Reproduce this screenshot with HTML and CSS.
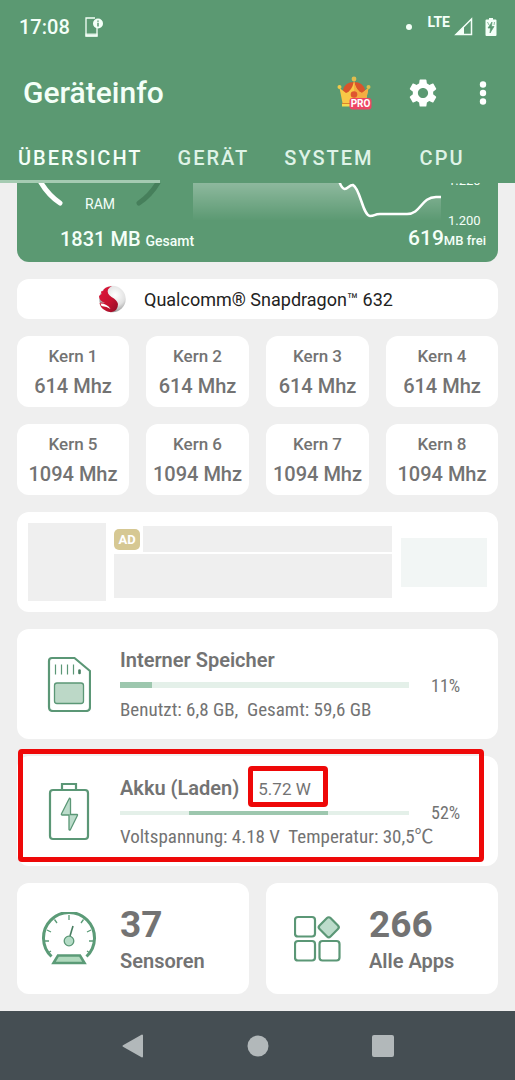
FILE: index.html
```html
<!DOCTYPE html>
<html lang="de">
<head>
<meta charset="utf-8">
<meta name="viewport" content="width=device-width, initial-scale=1">
<title>Geräteinfo</title>
<link rel="stylesheet" href="styles.css">
</head>
<body>
<header class="header">
  <div class="status">
    <time class="clock">17:08</time>
    <svg class="status-note" width="20" height="22" viewBox="0 0 20 22"><path d="M11 2H2v18h11v-8" fill="none" stroke="#f4fff8" stroke-width="1.300"/><path d="M1.500 17.500h12v3h-12z" fill="#f4fff8" opacity=".85"/><circle cx="14" cy="7.500" r="5" fill="#f4fff8"/><path d="M14 4.500v1.300M14 6.800v3.700" stroke="#5b9972" stroke-width="1.500"/></svg>
    <span class="status-dot"></span>
    <span class="lte">LTE</span>
    <svg class="signal" width="19" height="19" viewBox="0 0 19 19"><path d="M17.500 2v15.500H2z" fill="none" stroke="#f4fff8" stroke-width="1.500"/><path d="M10 9.500v8H2z" fill="#f4fff8"/></svg>
    <svg class="charge" width="12" height="20" viewBox="0 0 12 20"><path d="M4 1h4v1.500h2.500q1 0 1 1v14.500q0 1-1 1h-9q-1 0-1-1V3.500q0-1 1-1H4z" fill="#f4fff8"/><path d="M7 5 3 11h2.500L5 16l4-6.500H6.500zM2.500 5l1.500 3M9.500 5 9 8" fill="#5b9972" stroke="#5b9972" stroke-width=".7"/></svg>
  </div>
  <div class="toolbar">
    <h1 class="app-title">Geräteinfo</h1>
    <button class="icon-button" aria-label="Pro-Version">
      <svg width="36" height="36" viewBox="0 0 36 36">
        <path d="M7 15Q9 7 18 7t11 8l-2 10H9z" fill="#d9542b"/>
        <path d="M3.500 13 10 18q6-2 8-12 2 10 8 12l6.500-5-3 15H6.500z" fill="#f9c847"/>
        <path d="M18 6q2 10 8 12l6.500-5-3 15H18z" fill="#f5ad42"/>
        <path d="M6 28h12v3.500H6z" fill="#f5da4f"/><path d="M6 28h12v1H6z" fill="#d9862d"/>
        <circle cx="18" cy="19.500" r="3.300" fill="#df5630"/>
        <circle cx="18" cy="4" r="2.400" fill="#e1bd4e"/><circle cx="3.500" cy="12" r="2" fill="#f2ca4a"/><circle cx="32.500" cy="12" r="2" fill="#d9bd4d"/>
        <rect x="13.500" y="23" width="22" height="11.500" rx="3" fill="#ee4564"/>
        <text class="pro" x="24.500" y="32" text-anchor="middle">PRO</text>
      </svg>
    </button>
    <button class="icon-button" aria-label="Einstellungen">
      <svg width="34" height="34" viewBox="0 0 24 24"><path fill="#fff" d="M19.140 12.940c.040-.300.060-.610.060-.940 0-.320-.020-.640-.070-.940l2.030-1.580c.180-.140.230-.410.120-.610l-1.920-3.320c-.120-.220-.370-.290-.590-.220l-2.390.960c-.500-.380-1.030-.700-1.620-.940l-.360-2.540c-.040-.240-.240-.410-.480-.410h-3.840c-.240 0-.430.170-.470.410l-.360 2.540c-.590.240-1.130.570-1.620.940l-2.390-.960c-.220-.080-.470 0-.590.220L2.740 8.870c-.120.210-.080.470.120.610l2.030 1.580c-.050.300-.090.630-.090.940s.020.640.070.940l-2.030 1.580c-.180.140-.230.410-.120.610l1.920 3.320c.120.220.370.290.590.220l2.390-.960c.500.380 1.030.700 1.620.940l.360 2.540c.050.240.240.410.480.410h3.840c.240 0 .440-.170.470-.410l.360-2.540c.590-.240 1.130-.560 1.620-.940l2.390.960c.220.080.470 0 .590-.220l1.920-3.320c.120-.220.070-.470-.120-.610l-2.010-1.580zM12 15.600c-1.980 0-3.600-1.620-3.600-3.600s1.620-3.600 3.600-3.600 3.600 1.620 3.600 3.600-1.620 3.600-3.600 3.600z"/></svg>
    </button>
    <button class="icon-button more" aria-label="Mehr">
      <svg width="8" height="26" viewBox="0 0 8 26"><g fill="#fff"><circle cx="4" cy="4.500" r="3.200"/><circle cx="4" cy="13" r="3.200"/><circle cx="4" cy="21.500" r="3.200"/></g></svg>
    </button>
  </div>
  <nav class="tabs">
    <a class="tab tab-active" href="#uebersicht">ÜBERSICHT</a>
    <a class="tab" href="#geraet">GERÄT</a>
    <a class="tab" href="#system">SYSTEM</a>
    <a class="tab" href="#cpu">CPU</a>
  </nav>
</header>

<main class="content" id="uebersicht">
  <section class="ram">
    <div class="ram-left">
      <div class="gauge">
        <svg width="28" height="24" viewBox="0 0 28 24"><path d="M3-2Q11 12 23 20" fill="none" stroke="#fff" stroke-width="5" stroke-linecap="round"/></svg>
        <span class="gauge-label">RAM</span>
        <svg width="28" height="24" viewBox="0 0 28 24"><path d="M24-2Q16 12 4 20" fill="none" stroke="#467f5b" stroke-width="5" stroke-linecap="round"/></svg>
      </div>
      <p class="ram-total">1831 MB <small>Gesamt</small></p>
    </div>
    <div class="ram-right">
      <div class="chart">
        <svg class="chart-plot" viewBox="0 0 248 42" preserveAspectRatio="none">
          <defs><linearGradient id="fade" x1="0" y1="0" x2="0" y2="1"><stop offset="0" stop-color="#fff" stop-opacity=".31"/><stop offset=".9" stop-color="#fff" stop-opacity="0"/></linearGradient></defs>
          <path d="M0 0H147C152 10 155 1 160 2C167 5 170 33 177 33C182 33 181 31 187 31H214C228 31 228 14 243 14H248V42H0z" fill="url(#fade)"/>
          <path d="M146-2C152 14 155 1 160 2C167 5 170 33 177 33C182 33 181 31 187 31H214C228 31 228 14 243 14H248" fill="none" stroke="#fff" stroke-width="2.500"/>
        </svg>
        <div class="axis"><span>1.220</span><span>1.200</span></div>
      </div>
      <p class="ram-free">619<small>MB frei</small></p>
    </div>
  </section>

  <section class="card soc">
    <svg width="28" height="28" viewBox="0 0 28 28">
      <defs><radialGradient id="ball" cx=".6" cy=".35" r=".65"><stop offset="0" stop-color="#fff"/><stop offset=".6" stop-color="#e2e2e2"/><stop offset="1" stop-color="#9a9a9a"/></radialGradient><linearGradient id="flame" x1="0" y1="0" x2="1" y2="1"><stop offset="0" stop-color="#e3163b"/><stop offset=".6" stop-color="#c41230"/><stop offset="1" stop-color="#8d0c25"/></linearGradient></defs>
      <circle cx="14.500" cy="14" r="13.200" fill="url(#ball)"/>
      <path d="M14 1Q6 2 5 6L3 6.500 3.500 9 1 11Q1 16 7 18 2 17 1.500 18.500 3.500 26 13 27.300 20 26 20 19 19 15 13.500 12 8.500 8.500 10 4.500 11.500 2 14 1z" fill="url(#flame)"/>
      <path d="M2.500 18.500Q9 18.500 12.500 24 9 21.500 3.500 21z" fill="#fff"/>
    </svg>
    <span>Qualcomm® Snapdragon™ 632</span>
  </section>

  <section class="cores">
    <div class="card core"><span>Kern 1</span><b>614 Mhz</b></div>
    <div class="card core"><span>Kern 2</span><b>614 Mhz</b></div>
    <div class="card core"><span>Kern 3</span><b>614 Mhz</b></div>
    <div class="card core"><span>Kern 4</span><b>614 Mhz</b></div>
    <div class="card core"><span>Kern 5</span><b>1094 Mhz</b></div>
    <div class="card core"><span>Kern 6</span><b>1094 Mhz</b></div>
    <div class="card core"><span>Kern 7</span><b>1094 Mhz</b></div>
    <div class="card core"><span>Kern 8</span><b>1094 Mhz</b></div>
  </section>

  <aside class="card ad">
    <div class="ad-image"></div>
    <div class="ad-body">
      <div class="ad-head"><span class="ad-badge">AD</span><div class="ad-title"></div></div>
      <div class="ad-text"></div>
    </div>
    <div class="ad-action"></div>
  </aside>

  <section class="card row">
    <svg class="row-icon" width="44" height="56" viewBox="0 0 44 56"><path d="M5 2h22.500L43 15v36q0 4-4 4H6q-4 0-4-4V5q0-3 3-3z" fill="#fff" stroke="#5b9776" stroke-width="2.200"/><path d="M8.500 8.500v10M14.500 8.500v10M20.500 8.500v10M26.500 8.500v10" stroke="#5b9776" stroke-width="1.200"/><path d="M32.500 14.500v2.500" stroke="#477d60" stroke-width="2.600" stroke-linecap="round"/><rect x="7.500" y="27" width="29" height="20.500" rx="2.500" fill="#bcd8c7" stroke="#5b9776" stroke-width="1.300"/></svg>
    <div class="row-body">
      <h2 class="row-title">Interner Speicher</h2>
      <div class="bar bar-storage" role="progressbar" aria-label="Interner Speicher" aria-valuenow="11"><div class="bar-fill" style="width:11%"></div></div>
      <p class="row-sub">Benutzt: 6,8 GB,&nbsp; Gesamt: 59,6 GB</p>
    </div>
    <span class="percent">11%</span>
  </section>

  <section class="card row battery">
    <svg class="row-icon" width="42" height="60" viewBox="0 0 42 60"><path d="M14 9V3h14v6" fill="none" stroke="#5b9776" stroke-width="2.200"/><rect x="2" y="9" width="38" height="49" rx="3" fill="#fff" stroke="#5b9776" stroke-width="2.200"/><path d="M21 18q.5-1.500 1.500 0v15.500h6.500q.8.200.4 1L22.500 48.500q-1 1.300-1.500 0V34h-7q-1-.2-.5-1.200z" fill="#bcdccb" stroke="#5b9776" stroke-width="1.300"/></svg>
    <div class="row-body">
      <h2 class="row-title">Akku (Laden)<span class="watt">5.72 W</span></h2>
      <div class="bar" role="progressbar" aria-label="Akku"><div class="bar-fill" style="width:48%;margin-left:24%"></div></div>
      <p class="row-sub">Voltspannung: 4.18 V&nbsp; Temperatur: 30,5℃</p>
    </div>
    <span class="percent">52%</span>
  </section>

  <section class="tiles">
    <div class="card tile">
      <svg class="row-icon" width="56" height="54" viewBox="0 0 56 54"><path d="M10.500 44.500A25.500 25.500 0 1 1 45.500 44.500" fill="none" stroke="#5b9b77" stroke-width="3"/><path d="M28 3v5M13.500 7.500l2.500 3.500M42.500 7.500 40 11M6 18l4 2M50 18l-4 2M3 29h5M53 29h-5M7 41l3-2M49 41l-3-2" stroke="#5b9b77" stroke-width="1.300"/><path d="m29 24 3-10" stroke="#477d60" stroke-width="1.600"/><circle cx="28" cy="29" r="4.800" fill="#b4dcc6" stroke="#5b9776" stroke-width="1.300"/><path d="M17 43.500h22l4.500 7.500h-31z" fill="#b0d9bd" stroke="#5b9b77" stroke-width="2.600"/></svg>
      <div><strong>37</strong><span>Sensoren</span></div>
    </div>
    <div class="card tile">
      <svg class="row-icon" width="48" height="48" viewBox="0 0 48 48"><g fill="#fff" stroke="#5b9776" stroke-width="2.200"><rect x="1" y="2" width="20" height="19.500" rx="3"/><rect x="1" y="26" width="20" height="19.500" rx="3"/><rect x="25.500" y="26" width="20" height="19.500" rx="3"/><rect x="27" y="4.500" width="15.500" height="15.500" rx="2.500" transform="rotate(45 34.750 12.250)" fill="#bcdccb"/></g></svg>
      <div><strong>266</strong><span>Alle Apps</span></div>
    </div>
  </section>
</main>

<footer class="navbar">
  <button aria-label="Zurück"><svg width="22" height="24" viewBox="0 0 22 24"><path d="M20 1.500v21L1.500 12z" fill="#b2b8ba" stroke="#b2b8ba" stroke-width="2" stroke-linejoin="round"/></svg></button>
  <button aria-label="Start"><svg width="22" height="22" viewBox="0 0 22 22"><circle cx="11" cy="11" r="10.500" fill="#b2b8ba"/></svg></button>
  <button aria-label="Letzte Apps"><svg width="22" height="22" viewBox="0 0 22 22"><rect width="22" height="22" rx="2" fill="#b2b8ba"/></svg></button>
</footer>
</body>
</html>
```
FILE: styles.css
```css
* { box-sizing: border-box; }

body {
  margin: 0;
  min-height: 100vh;
  display: flex;
  flex-direction: column;
  background: #efefef;
  color: #737373;
  font-family: Roboto, "Noto Sans", "Noto Sans CJK SC", sans-serif;
}

h1, h2, p { margin: 0; }
svg { display: block; flex: none; }

button {
  border: 0;
  padding: 0;
  background: none;
  display: flex;
  align-items: center;
  justify-content: center;
}

.header { background: #5b9972; color: #f4fff8; }

.status {
  display: flex;
  align-items: center;
  height: 53px;
  padding: 0 18px 0 19px;
}
.clock { font-size: 20px; font-weight: 500; }
.status-note { margin-left: 14px; }
.status-dot {
  width: 6px;
  height: 6px;
  border-radius: 50%;
  background: #f4fff8;
  margin-left: auto;
}
.lte { font-size: 14px; font-weight: 700; line-height: 14px; margin: 0 4px 9px 15px; }
.charge { margin-left: 12px; }

.toolbar {
  display: flex;
  align-items: center;
  height: 79px;
  padding: 0 28px 0 23px;
}
.app-title { flex: 1; font-size: 30px; font-weight: 500; line-height: 36px; }
.icon-button { margin-left: 34px; }
.pro { font: 700 10px Roboto, sans-serif; fill: #fff; }
.more { margin-left: 39px; }

.tabs { display: flex; height: 51px; overflow: hidden; }
.tab {
  display: flex;
  align-items: center;
  justify-content: center;
  min-width: 102px;
  padding: 4px 17px 0 18px;
  border-bottom: 3px solid transparent;
  color: #dff3e7;
  font-size: 20px;
  font-weight: 500;
  letter-spacing: 2px;
  text-decoration: none;
}
.tab-active { color: #f4fff8; border-color: #a5cbb2; }

.content {
  flex: 1;
  display: flex;
  flex-direction: column;
  gap: 17px;
  padding: 0 17px 17px;
}

.card { background: #fff; border-radius: 12px; }

.ram {
  display: grid;
  grid-template-columns: 176px 1fr;
  height: 79px;
  border-radius: 0 0 12px 12px;
  background: #5b9972;
  color: #f4fff8;
}
.gauge {
  display: flex;
  align-items: flex-start;
  justify-content: space-between;
  height: 42px;
  padding: 0 30px 0 20px;
}
.gauge-label { font-size: 14px; line-height: 16px; padding-top: 13px; }
.ram-total {
  padding-left: 43px;
  font-size: 20px;
  font-weight: 500;
  line-height: 28px;
  white-space: nowrap;
}
.ram small { font-size: 14px; }
.chart { display: flex; height: 46px; overflow: hidden; }
.chart-plot { flex: 1; min-width: 0; height: 42px; }
.axis {
  width: 57px;
  padding-left: 7px;
  display: flex;
  flex-direction: column;
  font-size: 13px;
  line-height: 16px;
  justify-content: space-between;
  margin-top: -10px;
}
.ram .ram-free {
  padding-right: 12px;
  font-size: 21px;
  font-weight: 500;
  line-height: 18px;
  text-align: right;
}
.ram-free small { font-size: 13px; }

.soc {
  display: flex;
  align-items: center;
  justify-content: center;
  gap: 18px;
  height: 40px;
  padding-right: 24px;
  color: #222;
  font-size: 18px;
}

.cores {
  display: grid;
  grid-template-columns: 112fr 103fr 103fr 112fr;
  gap: 17px;
}
.core {
  display: flex;
  flex-direction: column;
  align-items: center;
  padding: 8px 0 3px;
  line-height: 24px;
  font-size: 17px;
  font-weight: 500;
  white-space: nowrap;
}
.core b { font-size: 20px; font-weight: 500; line-height: 36px; }

.ad {
  display: flex;
  align-items: center;
  height: 100px;
  padding: 0 11px;
}
.ad-image { width: 78px; height: 78px; background: #efefef; }
.ad-body { flex: 1; display: grid; gap: 2px; margin: 0 9px 0 8px; }
.ad-head { display: flex; align-items: center; gap: 3px; }
.ad-badge {
  width: 26px;
  border-radius: 5px;
  background: #d6c893;
  color: #fff;
  font-size: 13px;
  font-weight: 700;
  line-height: 21px;
  text-align: center;
}
.ad-title { flex: 1; height: 26px; background: #efefef; }
.ad-text { height: 44px; background: #efefef; }
.ad-action { width: 86px; height: 49px; background: #f2f6f5; }

.row {
  display: grid;
  grid-template-columns: 103px minmax(0, 1fr) 89px;
  align-items: center;
  height: 110px;
}
.row-icon { justify-self: center; }
.row-title { font-size: 20px; font-weight: 600; line-height: 28px; }
.row-sub, .percent {
  font-family: "Roboto Condensed", Roboto, "Noto Sans CJK SC", sans-serif;
  line-height: 24px;
  white-space: nowrap;
}
.row-sub { margin-top: 10px; font-size: 19px; }
.bar { height: 4px; margin-top: 8px; background: #e4f0e9; }
.bar-storage { height: 6px; }
.bar-fill { height: 100%; background: #9dc7ae; }
.percent { padding: 4px 0 0 22px; font-size: 18px; }

/* Highlight frames around the charging values */
.battery, .watt { position: relative; }
.watt { margin-left: 19px; font-size: 17px; font-weight: 400; }
.battery::after, .watt::after {
  content: "";
  position: absolute;
  border: 5px solid #ee0808;
  border-radius: 4px;
}
.battery::after { inset: -7px 14px 4px 1px; }
.watt::after { inset: -13px -17px -8px -10px; }

.tiles { display: grid; grid-template-columns: 1fr 1fr; gap: 17px; }
.tile {
  display: grid;
  grid-template-columns: 103px 1fr;
  align-items: center;
  height: 111px;
}
.tile strong { display: block; font-size: 37px; font-weight: 700; line-height: 44px; }
.tile span { display: block; font-size: 20px; font-weight: 600; line-height: 28px; }

.navbar {
  display: flex;
  align-items: center;
  justify-content: center;
  height: 69px;
  background: #454e53;
}
.navbar button { width: 125px; height: 48px; }
```
